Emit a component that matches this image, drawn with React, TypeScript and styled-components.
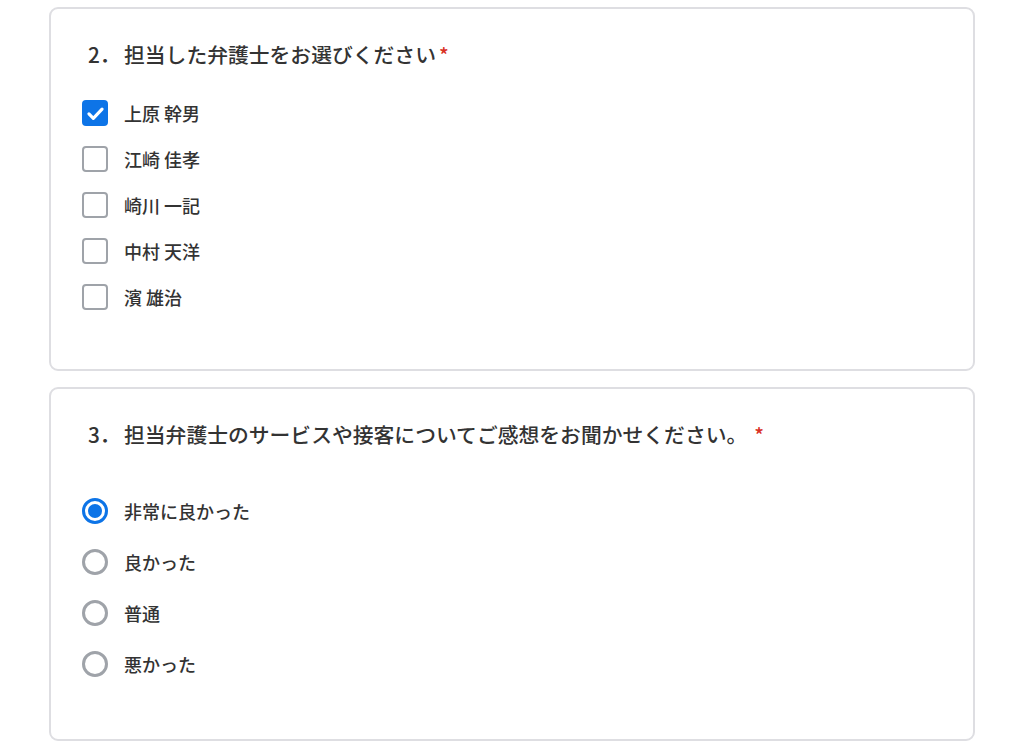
import React, { useState } from "react";
import styled, { createGlobalStyle, css } from "styled-components";

const GlobalStyle = createGlobalStyle`
    html, body {
        margin: 0;
        padding: 0;
        background: #ffffff;
    }
    body {
        font-family: "Noto Sans CJK JP", "Noto Sans", sans-serif;
        color: #333333;
    }
`;

const Page = styled.div`
    display: flex;
    flex-direction: column;
    gap: 16px;
    padding: 7px 49px 0 49px;
    width: 1024px;
    box-sizing: border-box;
`;

const Card = styled.section<{ $pad: string }>`
    border: 2px solid #dedee2;
    border-radius: 9px;
    background: #ffffff;
    padding: ${({ $pad }) => $pad};
    box-sizing: border-box;
`;

const Title = styled.h2<{ $gap: number }>`
    margin: 0 0 ${({ $gap }) => $gap}px 6px;
    font-size: 20.8px;
    font-weight: 500;
    line-height: 28px;
    color: #333333;
    display: flex;
    align-items: baseline;
`;

const Num = styled.span`
    width: 36px;
    flex-shrink: 0;
`;

const Required = styled.span<{ $space: number }>`
    color: #d93025;
    font-size: 20px;
    margin-left: ${({ $space }) => $space}px;
`;

const OptionList = styled.div<{ $gap: number }>`
    display: flex;
    flex-direction: column;
    gap: ${({ $gap }) => $gap}px;
`;

const Option = styled.label`
    display: flex;
    align-items: center;
    gap: 16px;
    cursor: pointer;
    font-size: 18px;
    font-weight: 500;
    color: #333333;
    line-height: 26px;
`;

const Box = styled.span<{ $checked: boolean }>`
    width: 26px;
    height: 26px;
    box-sizing: border-box;
    border-radius: 4px;
    display: flex;
    align-items: center;
    justify-content: center;
    flex-shrink: 0;
    ${({ $checked }) =>
        $checked
            ? css`
                  background: #0d74e7;
                  border: none;
              `
            : css`
                  background: #ffffff;
                  border: 2px solid #9fa3a9;
              `}
`;

const Radio = styled.span<{ $checked: boolean }>`
    width: 26px;
    height: 26px;
    box-sizing: border-box;
    border-radius: 50%;
    display: flex;
    align-items: center;
    justify-content: center;
    flex-shrink: 0;
    border: 3px solid ${({ $checked }) => ($checked ? "#0d74e7" : "#9fa3a9")};

    &::after {
        content: "";
        width: 14px;
        height: 14px;
        border-radius: 50%;
        background: ${({ $checked }) => ($checked ? "#0d74e7" : "transparent")};
    }
`;

const lawyers = ["上原 幹男", "江崎 佳孝", "崎川 一記", "中村 天洋", "濱 雄治"];
const impressions = ["非常に良かった", "良かった", "普通", "悪かった"];

export default function App() {
    const [picked, setPicked] = useState<string[]>(["上原 幹男"]);
    const [impression, setImpression] = useState("非常に良かった");

    const toggle = (name: string) =>
        setPicked((p) => (p.includes(name) ? p.filter((n) => n !== name) : [...p, name]));

    return (
        <>
            <GlobalStyle />
            <Page>
                <Card $pad="31px 36px 59px 31px">
                    <Title $gap={31}>
                        <Num>2．</Num>
                        担当した弁護士をお選びください
                        <Required $space={3}>*</Required>
                    </Title>
                    <OptionList $gap={20}>
                        {lawyers.map((name) => {
                            const on = picked.includes(name);
                            return (
                                <Option key={name} onClick={() => toggle(name)}>
                                    <Box $checked={on}>
                                        {on && (
                                            <svg width="21" height="21" viewBox="0 0 24 24" fill="none">
                                                <path
                                                    d="M4.5 12.5l5 5L19.5 7"
                                                    stroke="#ffffff"
                                                    strokeWidth="3.6"
                                                    strokeLinecap="round"
                                                    strokeLinejoin="round"
                                                />
                                            </svg>
                                        )}
                                    </Box>
                                    {name}
                                </Option>
                            );
                        })}
                    </OptionList>
                </Card>
                <Card $pad="31px 36px 62px 31px">
                    <Title $gap={49}>
                        <Num>3．</Num>
                        担当弁護士のサービスや接客についてご感想をお聞かせください。
                        <Required $space={7}>*</Required>
                    </Title>
                    <OptionList $gap={25}>
                        {impressions.map((label) => (
                            <Option key={label} onClick={() => setImpression(label)}>
                                <Radio $checked={impression === label} />
                                {label}
                            </Option>
                        ))}
                    </OptionList>
                </Card>
            </Page>
        </>
    );
}
